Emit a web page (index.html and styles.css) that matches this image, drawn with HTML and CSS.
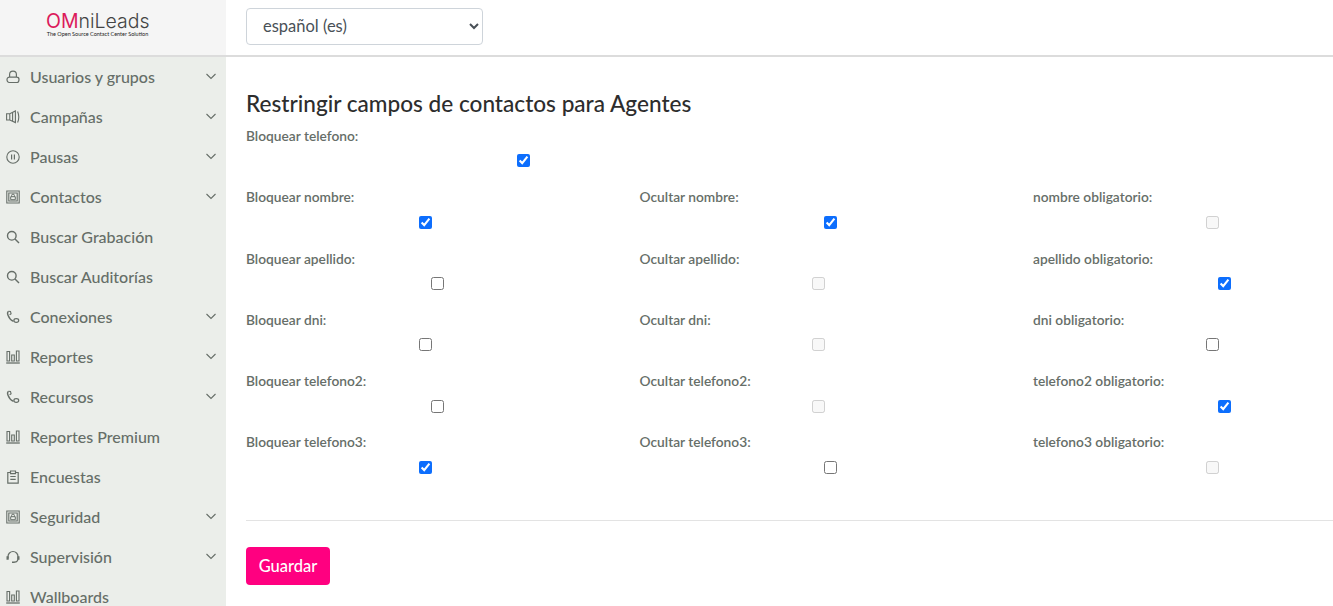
FILE: index.html
```html
<!DOCTYPE html>
<html lang="es">
<head>
<meta charset="utf-8">
<title>Restringir campos de contactos para Agentes</title>
<link rel="stylesheet" href="styles.css">
</head>
<body>
<svg class="defs" width="0" height="0" aria-hidden="true">
  <symbol id="i-chev" viewBox="0 0 12 12"><path d="M1.500 4l4.500 4.500L10.500 4" fill="none" stroke="currentColor" stroke-width="1.100"/></symbol>
  <symbol id="i-user" viewBox="0 0 14 14"><path d="M3.600 7.600V4.500a3.400 3.400 0 0 1 6.800 0v3.100M3.200 7.200h7.600a2.200 2.200 0 0 1 2.200 2.200c0 2-1 3.100-2.200 3.100H3.200C2 12.500 1 11.400 1 9.400a2.200 2.200 0 0 1 2.200-2.200z" fill="none" stroke="currentColor" stroke-width="1.200"/></symbol>
  <symbol id="i-camp" viewBox="0 0 14 14"><path d="M.6 3.800h3.200L9.400 1v11.600L3.800 10H.6zM3.800 3.800V10M6.600 2.600v8.600M11.600 1.500c1.300 3 1.300 8 0 11" fill="none" stroke="currentColor" stroke-width="1.100"/></symbol>
  <symbol id="i-pause" viewBox="0 0 14 14"><circle cx="7" cy="7" r="6.200" fill="none" stroke="currentColor" stroke-width="1.100"/><path d="M5.600 4.400v5.200M8.400 4.400v5.200" stroke="currentColor" stroke-width="1.200"/></symbol>
  <symbol id="i-book" viewBox="0 0 14 14"><path d="M.8 1h12.400v12H.8zM2.800 3h8.400v8H2.800z" fill="none" stroke="currentColor" stroke-width="1.100"/><path d="M4.700 6.700h4.600v3H4.700zM5.600 6.700V5.500a1.400 1.400 0 0 1 2.800 0v1.200" fill="none" stroke="currentColor"/></symbol>
  <symbol id="i-search" viewBox="0 0 14 14"><circle cx="5.800" cy="5.800" r="4.300" fill="none" stroke="currentColor" stroke-width="1.400"/><path d="M9 9l4 4" stroke="currentColor" stroke-width="1.500"/></symbol>
  <symbol id="i-phone" viewBox="0 0 14 14"><path d="M2.500 1.200C1.500 2 1.300 3.500 2 5.200c1 2.600 3 5 5.500 6.200" fill="none" stroke="currentColor" stroke-width="1.400"/><path d="M2.500 1.200l2 .3.600 2.200-1.500 1.200" fill="none" stroke="currentColor" stroke-width="1.100"/><ellipse cx="10.300" cy="10.500" rx="2.400" ry="1.800" fill="none" stroke="currentColor" stroke-width="1.200"/></symbol>
  <symbol id="i-chart" viewBox="0 0 14 14"><path d="M.2 13h13.600" stroke="currentColor" stroke-width="1.300"/><path d="M1 1.500h2.600v9.500H1zM5.700 5h2.600v6H5.700zM10.400 1h2.600v10h-2.600z" fill="none" stroke="currentColor" stroke-width="1.100"/></symbol>
  <symbol id="i-clip" viewBox="0 0 14 14"><path d="M4.500 2.500H1.800v10.700h10.400V2.500H9.500M4.500 1h5v2.600h-5zM4.300 6.500h5.400M4.300 9.300h5.400" fill="none" stroke="currentColor" stroke-width="1.200"/></symbol>
  <symbol id="i-head" viewBox="0 0 14 14"><path d="M2 8.500V6.500a5 5 0 0 1 10 0v2c0 2-1.200 3.500-3.500 3.700" fill="none" stroke="currentColor" stroke-width="1.200"/><path d="M.5 6.300h2.200v3.400H.5zM11.300 6.300h2.200v3.400h-2.200zM6 11.500h2.800v1.500H6z" fill="currentColor"/></symbol>
</svg>
<div class="app">
  <aside class="sidebar">
    <div class="brand">
      <div class="logo">
        <div class="logo-name"><span class="logo-om">OM</span>niLeads</div>
        <div class="logo-tag">The Open Source Contact Center Solution</div>
      </div>
    </div>
    <nav class="nav">
      <a class="nav-item"><svg class="nav-icon"><use href="#i-user"/></svg><span class="nav-text">Usuarios y grupos</span><svg class="nav-chev"><use href="#i-chev"/></svg></a>
      <a class="nav-item"><svg class="nav-icon"><use href="#i-camp"/></svg><span class="nav-text">Campañas</span><svg class="nav-chev"><use href="#i-chev"/></svg></a>
      <a class="nav-item"><svg class="nav-icon"><use href="#i-pause"/></svg><span class="nav-text">Pausas</span><svg class="nav-chev"><use href="#i-chev"/></svg></a>
      <a class="nav-item"><svg class="nav-icon"><use href="#i-book"/></svg><span class="nav-text">Contactos</span><svg class="nav-chev"><use href="#i-chev"/></svg></a>
      <a class="nav-item"><svg class="nav-icon"><use href="#i-search"/></svg><span class="nav-text">Buscar Grabación</span></a>
      <a class="nav-item"><svg class="nav-icon"><use href="#i-search"/></svg><span class="nav-text">Buscar Auditorías</span></a>
      <a class="nav-item"><svg class="nav-icon"><use href="#i-phone"/></svg><span class="nav-text">Conexiones</span><svg class="nav-chev"><use href="#i-chev"/></svg></a>
      <a class="nav-item"><svg class="nav-icon"><use href="#i-chart"/></svg><span class="nav-text">Reportes</span><svg class="nav-chev"><use href="#i-chev"/></svg></a>
      <a class="nav-item"><svg class="nav-icon"><use href="#i-phone"/></svg><span class="nav-text">Recursos</span><svg class="nav-chev"><use href="#i-chev"/></svg></a>
      <a class="nav-item"><svg class="nav-icon"><use href="#i-chart"/></svg><span class="nav-text">Reportes Premium</span></a>
      <a class="nav-item"><svg class="nav-icon"><use href="#i-clip"/></svg><span class="nav-text">Encuestas</span></a>
      <a class="nav-item"><svg class="nav-icon"><use href="#i-book"/></svg><span class="nav-text">Seguridad</span><svg class="nav-chev"><use href="#i-chev"/></svg></a>
      <a class="nav-item"><svg class="nav-icon"><use href="#i-head"/></svg><span class="nav-text">Supervisión</span><svg class="nav-chev"><use href="#i-chev"/></svg></a>
      <a class="nav-item"><svg class="nav-icon"><use href="#i-chart"/></svg><span class="nav-text">Wallboards</span></a>
    </nav>
  </aside>
  <div class="main">
    <header class="topbar">
      <select class="lang"><option>español (es)</option></select>
    </header>
    <form class="content">
      <h1 class="title">Restringir campos de contactos para Agentes</h1>
      <div class="fields">
        <div class="field"><label class="label">Bloquear telefono:</label><div class="ctl wide"><input type="checkbox" checked></div></div>
        <div class="field"></div>
        <div class="field"></div>

        <div class="field"><label class="label">Bloquear nombre:</label><div class="ctl near"><input type="checkbox" checked></div></div>
        <div class="field"><label class="label">Ocultar nombre:</label><div class="ctl far"><input type="checkbox" checked></div></div>
        <div class="field"><label class="label">nombre obligatorio:</label><div class="ctl near"><input type="checkbox" disabled></div></div>

        <div class="field"><label class="label">Bloquear apellido:</label><div class="ctl far"><input type="checkbox"></div></div>
        <div class="field"><label class="label">Ocultar apellido:</label><div class="ctl near"><input type="checkbox" disabled></div></div>
        <div class="field"><label class="label">apellido obligatorio:</label><div class="ctl far"><input type="checkbox" checked></div></div>

        <div class="field"><label class="label">Bloquear dni:</label><div class="ctl near"><input type="checkbox"></div></div>
        <div class="field"><label class="label">Ocultar dni:</label><div class="ctl near"><input type="checkbox" disabled></div></div>
        <div class="field"><label class="label">dni obligatorio:</label><div class="ctl near"><input type="checkbox"></div></div>

        <div class="field"><label class="label">Bloquear telefono2:</label><div class="ctl far"><input type="checkbox"></div></div>
        <div class="field"><label class="label">Ocultar telefono2:</label><div class="ctl near"><input type="checkbox" disabled></div></div>
        <div class="field"><label class="label">telefono2 obligatorio:</label><div class="ctl far"><input type="checkbox" checked></div></div>

        <div class="field"><label class="label">Bloquear telefono3:</label><div class="ctl near"><input type="checkbox" checked></div></div>
        <div class="field"><label class="label">Ocultar telefono3:</label><div class="ctl far"><input type="checkbox"></div></div>
        <div class="field"><label class="label">telefono3 obligatorio:</label><div class="ctl near"><input type="checkbox" disabled></div></div>
      </div>
      <hr class="rule">
      <button class="save" type="button">Guardar</button>
    </form>
  </div>
</div>
</body>
</html>
```
FILE: styles.css
```css
* { box-sizing: border-box; }
html, body { margin: 0; height: 100%; overflow: hidden; background: #fff; }
body { font-family: Lato, "Noto Sans", sans-serif; color: #666e68; }
.defs { display: block; height: 0; }
.app { display: flex; height: 606px; overflow: hidden; }

.sidebar { flex: 0 0 226px; background: #ebeeea; overflow: hidden; }
.brand { height: 57px; background: #f5f5f5; border-bottom: 2px solid #dcdcdc; padding: 11px 0 0 46px; }
.logo { width: 103px; text-align: center; }
.logo-name { font-family: Inter, sans-serif; font-weight: 300; font-size: 19.500px; line-height: 20px; color: #444; white-space: nowrap; }
.logo-om { color: #dc1a5c; font-weight: 400; }
.logo-tag { font-size: 5.500px; line-height: 7px; font-weight: 400; color: #222; white-space: nowrap; }

.nav { display: flex; flex-direction: column; }
.nav-item { flex: 0 0 40px; height: 40px; display: flex; align-items: center; padding: 0 9px 0 6px; }
.nav-icon { width: 14px; height: 14px; flex: none; margin-right: 10px; color: #666e68; }
.nav-text { flex: 1; font-size: 16px; font-weight: 500; white-space: nowrap; padding-bottom: 2px; }
.nav-chev { width: 12px; height: 12px; flex: none; color: #666e68; margin-bottom: 2px; }

.main { flex: 1; min-width: 0; overflow: hidden; }
.topbar { height: 57px; border-bottom: 2px solid #dcdcdc; padding: 8px 0 0 20px; }
.lang { display: block; width: 237px; height: 37px; padding: 0 12px 2px; border: 1px solid #ced4da; border-radius: 4px; background: #fff; color: #495057; font: 400 16.500px Lato, sans-serif; }

.content { padding: 34px 0 0 20px; }
.title { margin: 0 0 8px; font-size: 22.600px; line-height: 26px; font-weight: 500; color: #2d2d2d; }
.fields { display: grid; grid-template-columns: repeat(3, 393.500px); grid-auto-rows: 61.280px; }
.label { display: block; font-size: 13.750px; line-height: 21px; font-weight: 600; white-space: nowrap; }
.ctl { height: 29.900px; display: flex; align-items: center; }
.ctl input { width: 13px; height: 13px; margin: 0; accent-color: #0d6efd; }
.near { padding-left: 172.500px; }
.far { padding-left: 184.500px; }
.wide { padding-left: 270.500px; }

.rule { margin: 27.300px 0 0; border: 0; border-top: 1px solid #e3e3e3; }
.save { display: block; margin-top: 26px; width: 84px; height: 38px; padding: 0; border: 0; border-radius: 4px; background: #ff0080; color: #fff; font: 500 16.500px Lato, sans-serif; }
```
